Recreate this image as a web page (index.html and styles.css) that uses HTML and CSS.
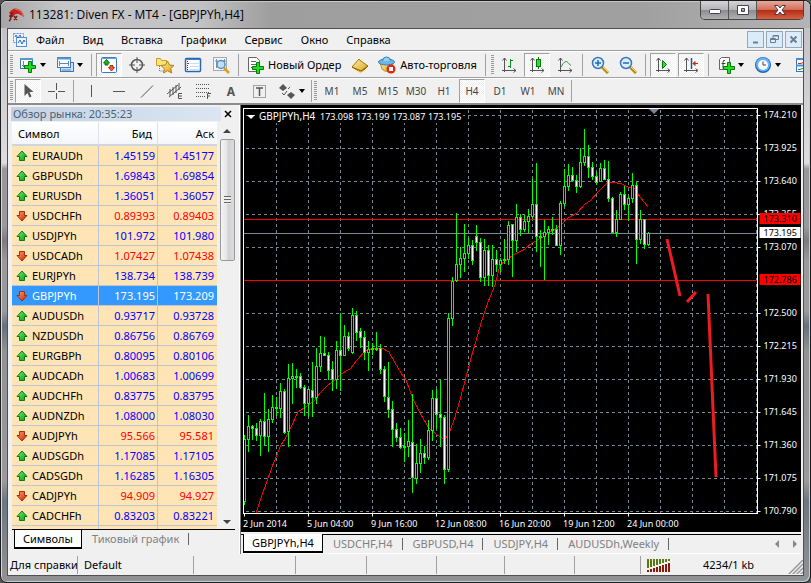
FILE: index.html
```html
<!DOCTYPE HTML>
<html lang="ru">
<head>
<meta charset="UTF-8">
<title>113281: Diven FX - MT4 - [GBPJPYh,H4]</title>
<link rel="stylesheet" href="styles.css">
</head>
<body>
<svg width="0" height="0" class="defs">
	<defs>
		<linearGradient id="gGreen" x1="0" y1="0" x2="1" y2="1"><stop offset="0" stop-color="#7be87b"/><stop offset="1" stop-color="#00a010"/></linearGradient>
		<linearGradient id="gRed" x1="0" y1="0" x2="1" y2="1"><stop offset="0" stop-color="#ff9a70"/><stop offset="1" stop-color="#d02000"/></linearGradient>
		<linearGradient id="gGold" x1="0" y1="0" x2="1" y2="1"><stop offset="0" stop-color="#fff3a8"/><stop offset="1" stop-color="#d89a10"/></linearGradient>
		<symbol id="up" viewBox="0 0 12 12"><path d="M6 1 L11 6.500 H8.500 V10.500 H3.500 V6.500 H1 Z" fill="url(#gGreen)" stroke="#08780f"/></symbol>
		<symbol id="down" viewBox="0 0 12 12"><path d="M6 11 L11 5.500 H8.500 V1.500 H3.500 V5.500 H1 Z" fill="url(#gRed)" stroke="#a03010"/></symbol>
		<symbol id="plus" viewBox="0 0 12 12"><path d="M4.500 .5h3v4h4v3h-4v4h-3v-4h-4v-3h4z" fill="#1fe01f" stroke="#067a0a"/></symbol>
		<symbol id="axes" viewBox="0 0 18 18"><path d="M4.500 2v14M2 14.500h14M2.500 4.500l2-2.500 2 2.500M13.500 12.500l2.500 2-2.500 2" fill="none" stroke="#555"/></symbol>
	</defs>
</svg>

<div class="window">
	<header class="title">
		<svg width="18" height="18" viewBox="0 0 18 18"><path d="M2 7 Q6 1 11 3 Q16 5 17 11 L12 8 Q8 7 6 11 Z" fill="#c8201c"/><path d="M8 3 Q14 4 16 10" fill="none" stroke="#f07060"/><path d="M2 15 Q4 14 4 10 Q4 7 6 7 M2 10h4M7 10l3 4M10 10l-3 4" fill="none" stroke="#7a1a18" stroke-width="1.500"/></svg>
		<h1>113281: Diven FX - MT4 - [GBPJPYh,H4]</h1>
		<div class="winbtns">
			<button aria-label="Minimize"><svg width="14" height="12"><rect x="1.500" y="5.500" width="11" height="4" rx="1" fill="#fff" stroke="#445"/></svg></button>
			<button aria-label="Maximize"><svg width="14" height="12"><path d="M1.500 1.500h11v9h-11z M5.500 4.500h3v3h-3z" fill="#fff" fill-rule="evenodd" stroke="#445"/></svg></button>
			<button class="close" aria-label="Close"><svg width="14" height="12"><path d="M1.500 1.500h3.500l2 2.500 2-2.500h3.500l-3.500 4.500 3.500 4.500h-3.500l-2-2.500-2 2.500h-3.500l3.500-4.500z" fill="#fff" stroke="#534"/></svg></button>
		</div>
	</header>

	<div class="client">
		<nav class="menu">
			<svg width="16" height="16"><g fill="#eef5ff" stroke="#5a8fd8"><rect x="1.500" y="1.500" width="10" height="9" stroke-dasharray="2 1"/><rect x="4.500" y="5.500" width="10" height="9"/></g><path d="M3 5l1-2 2 3 2-3 1 2M6 11l2-3 2 4 2-4 1 2" fill="none" stroke="#2a68c8"/></svg>
			<button>Файл</button><button>Вид</button><button>Вставка</button><button>Графики</button><button>Сервис</button><button>Окно</button><button>Справка</button>
			<div class="mdi">
				<button aria-label="Minimize chart"><svg width="11" height="11"><path d="M3 8.500h5" stroke="#6b7f94" stroke-width="2"/></svg></button>
				<button aria-label="Restore chart"><svg width="11" height="11"><path d="M4 4V1.500h5.500v4H7M4 2h6" fill="none" stroke="#6b7f94"/><path d="M1.500 4.500h5v4h-5zM1 5.500h6" fill="none" stroke="#6b7f94"/></svg></button>
				<button aria-label="Close chart"><svg width="11" height="11"><path d="M2.500 2.500l6 6M8.500 2.500l-6 6" stroke="#6b7f94" stroke-width="2"/></svg></button>
			</div>
		</nav>

		<div class="toolbar">
			<i class="grip"></i>
			<button class="tool drop" aria-label="New chart"><svg width="18" height="18"><rect x="1.500" y="2.500" width="12" height="10" fill="#fff" stroke="#3d78b8"/><path d="M1 3h13" stroke="#5b96d0" stroke-width="2"/><path d="M4.500 5v6M3 9.500h8" stroke="#789"/><use href="#plus" x="5" y="5" width="12" height="12"/></svg><b></b></button>
			<button class="tool drop" aria-label="Profiles"><svg width="18" height="18"><rect x="4.500" y="6.500" width="13" height="9" fill="#c8defa" stroke="#3d78b8"/><rect x="1.500" y="1.500" width="13" height="10" fill="#f4faff" stroke="#3d78b8"/><path d="M1 2.500h14" stroke="#5b96d0" stroke-width="2"/><path d="M3.500 5v5M12.500 5v5M3 7.500h10M6 14h9" stroke="#68a"/></svg><b></b></button>
			<i class="sep"></i>
			<button class="tool on" aria-label="Market watch"><svg width="18" height="18"><rect x="1.500" y="1.500" width="15" height="15" rx="1" fill="#fff" stroke="#3a78c0"/><path d="M1 2.500h16" stroke="#68a5e0"/><path d="M6.500 3.500l3 3.500h-1.500v2h-3v-2H3.500z" fill="#20b020" stroke="#08780f"/><path d="M11.500 15l3-3.500h-1.500v-2h-3v2H8.500z" fill="#f06030" stroke="#b03010"/></svg></button>
			<button class="tool" aria-label="Data window"><svg width="18" height="18"><circle cx="9" cy="9" r="5.500" fill="none" stroke="#555" stroke-width="1.500"/><path d="M9 1v6M9 11v6M1 9h6M11 9h6" stroke="#555"/></svg></button>
			<button class="tool" aria-label="Navigator"><svg width="20" height="18"><path d="M1.500 2.500h4l1 2h5v5h-10z" fill="#fbe27a" stroke="#c8a020"/><path d="M4.500 10v5h4" fill="none" stroke="#777" stroke-dasharray="1 1"/><path d="M12.500 5l2 4 4.500.5-3.300 3 1 4.500-4.200-2.300-4 2.300.8-4.500-3.300-3 4.500-.5z" fill="url(#gGold)" stroke="#b08010"/></svg></button>
			<button class="tool" aria-label="Terminal"><svg width="18" height="18"><rect x="1.500" y="2.500" width="15" height="13" rx="1" fill="#fff" stroke="#2868b0" stroke-width="1.500"/><path d="M1 3.500h16" stroke="#3a80c8"/><path d="M3.500 5v10" stroke="#204080" stroke-dasharray="1 1"/><path d="M3 7.500h2" stroke="#e02020"/><path d="M6 7.500h9M6 10.500h9M6 13.500h9" stroke="#c8dcf4"/></svg></button>
			<button class="tool" aria-label="Strategy tester"><svg width="18" height="18"><rect x="1.500" y="1.500" width="13" height="13" fill="#f4f6f8" stroke="#a0a8b0"/><path d="M4.500 3v9M12.500 3v9M3 5h3M11 5h3" stroke="#8090a0"/><circle cx="9" cy="8.500" r="4" fill="#c0e0f8" stroke="#5a90b8" stroke-width="1.500"/><path d="M12 12l5 5" stroke="#d8a020" stroke-width="2.500"/></svg></button>
			<i class="sep"></i>
			<button class="tool text"><svg width="18" height="18"><path d="M2.500 1.500h8l3 3v11h-11z" fill="#fff" stroke="#666"/><path d="M5 5.500h5M5 8.500h6M5 11.500h4" stroke="#666"/><use href="#plus" x="6" y="6" width="12" height="12"/></svg>Новый Ордер</button>
			<button class="tool" aria-label="MetaEditor"><svg width="18" height="18"><path d="M1 11l7-8q1 2 2 2l7 5-7 7z" fill="url(#gGold)" stroke="#a87010"/><path d="M1 11l9 4 7-5" fill="none" stroke="#8a5a08"/><path d="M2 13l8 4 7-5" fill="none" stroke="#fff0b0"/></svg></button>
			<button class="tool text"><svg width="18" height="18"><path d="M2 7h13l-1 6q-5 5-10 0z" fill="url(#gGold)" stroke="#c09020"/><ellipse cx="8.500" cy="6" rx="8" ry="3" fill="#6ab8e8" stroke="#3880b0"/><path d="M4.500 5q0-4 4-4t4 4" fill="#90d0f4" stroke="#3880b0"/><circle cx="13" cy="13" r="4.500" fill="#e02818"/><rect x="11" y="11" width="4" height="4" fill="#fff"/></svg>Авто-торговля</button>
			<i class="sep"></i><i class="grip"></i>
			<button class="tool" aria-label="Bar chart"><svg width="18" height="18"><use href="#axes" width="18" height="18"/><path d="M10.500 3v9M8 10.500h3M10 4.500h3" stroke="#0a9020"/></svg></button>
			<button class="tool on" aria-label="Candlesticks"><svg width="18" height="18"><use href="#axes" width="18" height="18"/><path d="M10.500 1v12" stroke="#067a0a"/><rect x="8.500" y="3.500" width="4" height="7" fill="#2be02b" stroke="#067a0a"/></svg></button>
			<button class="tool" aria-label="Line chart"><svg width="18" height="18"><use href="#axes" width="18" height="18"/><path d="M5 11q4-8 7-4.500t3 3" fill="none" stroke="#2a9a3a"/></svg></button>
			<i class="sep"></i>
			<button class="tool" aria-label="Zoom in"><svg width="18" height="18"><path d="M11 11l6 6" stroke="#b88a10" stroke-width="3"/><path d="M11 10l6 6" stroke="#f8dc60"/><circle cx="7" cy="7" r="5.500" fill="#d8eefc" stroke="#3878c0" stroke-width="1.500"/><path d="M4 7h6M7 4v6" stroke="#2868b0" stroke-width="1.500"/></svg></button>
			<button class="tool" aria-label="Zoom out"><svg width="18" height="18"><path d="M11 11l6 6" stroke="#b88a10" stroke-width="3"/><path d="M11 10l6 6" stroke="#f8dc60"/><circle cx="7" cy="7" r="5.500" fill="#d8eefc" stroke="#3878c0" stroke-width="1.500"/><path d="M4 7h6" stroke="#2868b0" stroke-width="1.500"/></svg></button>
			<i class="sep"></i>
			<button class="tool on" aria-label="Auto scroll"><svg width="18" height="18"><use href="#axes" width="18" height="18"/><path d="M8.500 4.500l4 4-4 4z" fill="#2be02b" stroke="#067a0a"/></svg></button>
			<button class="tool on" aria-label="Chart shift"><svg width="18" height="18"><use href="#axes" width="18" height="18"/><path d="M9.500 2v11" stroke="#1858a0" stroke-width="1.500"/><path d="M11 7.500h5M11 7.500l2-2v4z" fill="#e04020" stroke="#c03010"/></svg></button>
			<i class="sep"></i>
			<button class="tool drop" aria-label="Indicators"><svg width="18" height="18"><path d="M2.500 3.500l2-2h8v12h-10z" fill="#fff" stroke="#666"/><path d="M8 4.500q-2-1-2 2v6M4.500 7.500h4" fill="none" stroke="#444"/><use href="#plus" x="6" y="6" width="12" height="12"/></svg><b></b></button>
			<button class="tool drop" aria-label="Periods"><svg width="18" height="18"><circle cx="9" cy="9" r="8" fill="#1868c0"/><circle cx="9" cy="8.500" r="7" fill="#68b0f0"/><circle cx="9" cy="9" r="5" fill="#f6faff"/><path d="M9 5.500V9h3" fill="none" stroke="#444"/></svg><b></b></button>
			<button class="tool drop" aria-label="Templates"><svg width="18" height="18"><rect x="1.500" y="2.500" width="16" height="13" fill="#fff" stroke="#3a78c0"/><path d="M1 3h17M1 9.500h17" stroke="#4a90d8" stroke-width="2"/><path d="M3 7.500h3l2-1h3l1 1h4" fill="none" stroke="#c03020"/><path d="M3 13.500h2l2-1 3 1 3-2 3 1" fill="none" stroke="#20902a"/></svg></button>
		</div>

		<div class="toolbar second">
			<i class="grip"></i>
			<button class="tool on" aria-label="Cursor"><svg width="18" height="18"><path d="M5.500 2v12l3-3 2 4.500 2-1-2-4.500h4z" fill="#555"/></svg></button>
			<button class="tool" aria-label="Crosshair"><svg width="18" height="18"><path d="M9.500 1v7M9.500 11v6M1 9.500h7M11 9.500h7" stroke="#555"/></svg></button>
			<i class="sep"></i>
			<button class="tool" aria-label="Vertical line"><svg width="18" height="18"><path d="M9.500 3v12" stroke="#555"/></svg></button>
			<button class="tool" aria-label="Horizontal line"><svg width="18" height="18"><path d="M3 9.500h12" stroke="#555"/></svg></button>
			<button class="tool" aria-label="Trendline"><svg width="18" height="18"><path d="M3 15.500L15 3.500" stroke="#555"/></svg></button>
			<button class="tool" aria-label="Equidistant channel"><svg width="18" height="18"><path d="M1 12L12 3M3 15L15 5M4 7v7M7 5v8M10 3v8M13 1v7" stroke="#555"/><path d="M16 11.500h-3.500v5H16M13 14h3" fill="none" stroke="#555"/></svg></button>
			<button class="tool" aria-label="Fibonacci"><svg width="18" height="18"><path d="M2 2.500h14M2 6.500h14M2 10.500h14M2 14.500h9" stroke="#555" stroke-dasharray="1 1"/><path d="M13.500 17v-5.500H17M13 14h3" fill="none" stroke="#555"/></svg></button>
			<button class="tool letter">A</button>
			<button class="tool" aria-label="Text label"><svg width="18" height="18"><rect x="3.500" y="3.500" width="12" height="12" fill="none" stroke="#555" stroke-dasharray="1 1"/><path d="M6 6h7M9.500 6v8" stroke="#555" stroke-width="1.500"/></svg></button>
			<button class="tool drop" aria-label="Arrows"><svg width="18" height="18"><path d="M5 2l4 4-4 3-4-3zM13 10l4 3-4 4-4-4z" fill="#555"/><path d="M10 7l2-2M4 11l2 2 3-4" fill="none" stroke="#555"/></svg><b></b></button>
			<i class="sep end"></i><i class="grip end"></i>
			<button class="tool tf">M1</button><button class="tool tf">M5</button><button class="tool tf">M15</button><button class="tool tf">M30</button><button class="tool tf">H1</button><button class="tool tf on">H4</button><button class="tool tf">D1</button><button class="tool tf">W1</button><button class="tool tf">MN</button>
			<i class="sep end"></i>
		</div>

		<div class="work">
			<section class="market">
				<div class="caption"><h2>Обзор рынка: 20:35:23</h2><button aria-label="Close panel"><svg width="8" height="8"><path d="M1 1l6 6M7 1l-6 6" stroke="#000" stroke-width="1.500"/></svg></button></div>
				<div class="list">
					<div class="rows">
						<table>
							<thead><tr><th>Символ</th><th>Бид</th><th>Аск</th></tr></thead>
							<tbody id="quotes"></tbody>
						</table>
					</div>
					<div class="scroll"><i class="arr-up"></i><div class="thumb"><i></i></div><i class="arr-down"></i></div>
				</div>
				<div class="tabs left"><button class="active">Символы</button><button>Тиковый график</button></div>
			</section>

			<section class="chart">
				<svg id="chart"></svg>
				<div class="tabs"><button class="active">GBPJPYh,H4</button><button>USDCHF,H4</button><button>GBPUSD,H4</button><button>USDJPY,H4</button><button>AUDUSDh,Weekly</button>
					<span class="pager"><svg width="26" height="10"><path d="M6 1v8L2 5zM20 1v8l4-4z" fill="#888"/></svg></span>
				</div>
			</section>
		</div>

		<footer class="status">
			<span>Для справки</span><span>Default</span><span></span><span></span><span></span><span></span><span></span><span></span>
			<span class="net"><svg id="bars" width="24" height="13"></svg><em>4234/1 kb</em><svg class="size" width="15" height="15"><path d="M0 15L15 0M4 15L15 4M8 15l7-7M12 15l3-3" stroke="#999" stroke-width="1.500"/></svg></span>
		</footer>
	</div>
</div>
<script src="script.js"></script>
</body>
</html>
```

FILE: styles.css
```css
html, body, h1, h2, button, table { margin:0; padding:0; }
* { box-sizing:border-box; }
html, body { height:100%; }
body { font:normal 11px "Noto Sans","Open Sans",Tahoma,sans-serif; color:#000; background:#555; overflow:hidden; }
svg { display:block; flex:none; }
.defs { position:absolute; }
button { font:inherit; color:inherit; background:none; border:0; white-space:nowrap; }
i { font-style:normal; flex:none; }

/* window frame */
.window { height:100%; display:flex; flex-direction:column; padding:0 6px 6px; border:1px solid #1c1c1e; border-radius:7px; background:linear-gradient(#bdbdc0,#c9c9cd 60px,#dedee0 162px,#98989a 168px,#9a9a9c 225px,#7c7c80 240px,#9a9a9c 260px,#9a9a9c 310px,#65717c 325px,#909294 350px,#9a9a9c 480px,#6c7780 500px,#939395); box-shadow:inset 1px 1px 0 #d8d8da, inset -1px -1px 0 #b8d0d8; }
.title { flex:none; display:flex; align-items:center; height:27px; margin:0 -6px; padding-left:6px; border-radius:6px 6px 0 0; background:linear-gradient(90deg,#a6a6a8,#c6c6c8 60px,#c2c2c4 200px,#9e9e9e 270px,#a0a0a0 640px,#b4b4b6); box-shadow:inset 0 1px 0 #c8c8c8; }
.title h1 { flex:1; margin-left:4px; font:normal 12px/16px "Open Sans","Noto Sans",sans-serif; }
.winbtns { display:flex; align-self:flex-start; margin-right:6px; border:1px solid #444; border-top:0; border-radius:0 0 5px 5px; overflow:hidden; }
.winbtns button { display:flex; align-items:center; justify-content:center; width:28px; height:18px; border-right:1px solid #555; background:linear-gradient(#d4d4d6,#b4b4b8 48%,#8c8c90 50%,#b0b0b2); }
.winbtns .close { width:46px; border-right:0; background:linear-gradient(#e8a898,#d0705c 48%,#b02c14 50%,#d86040); }
.client { flex:1; min-height:0; display:flex; flex-direction:column; background:#f0f0f0; border:1px solid #505050; }

/* menu and toolbars */
.menu { flex:none; display:flex; align-items:center; height:22px; padding-left:4px; border-bottom:1px solid #a0a0a0; }
.menu > button { padding:0 9px 0 8px; line-height:20px; }
.menu > button + button { padding-left:9px; }
.mdi { display:flex; gap:2px; margin:0 1px 0 auto; }
.mdi button { display:flex; align-items:center; justify-content:center; width:17px; height:17px; border:1px solid #94a8bc; background:#dcebf9; }
.toolbar { flex:none; display:flex; align-items:center; height:27px; overflow:hidden; border-top:1px solid #fff; border-bottom:1px solid #a0a0a0; }
.grip { width:3px; height:20px; margin:0 1px 0 2px; background:repeating-linear-gradient(#999 0,#999 1px,#f0f0f0 1px,#f0f0f0 2px); }
.sep { width:1px; height:22px; margin:0 3px; background:#a0a0a0; }
.sep.end { margin:0 2px 0 1px; }
.grip.end { margin-left:0; }
.tool { flex:none; display:flex; align-items:center; justify-content:center; width:28px; height:24px; }
.tool.on { width:26px; margin:0 1px; border:1px solid; border-color:#a0a0a0 #fff #fff #a0a0a0; background:repeating-conic-gradient(#fff 0 25%,#f0f0f0 0 50%) 0 0/2px 2px; }
.tool.drop { width:37px; gap:3px; }
.tool.drop b { border:3px solid transparent; border-top:4px solid #000; border-bottom:0; }
.tool.text { width:auto; gap:4px; padding:0 5px 0 4px; }
.letter { font-size:12px; font-weight:bold; color:#555; }
.tf { font-size:10px; color:#444; }
.second { border-bottom:2px solid #8c8c8c; }

/* market watch */
.work { flex:1; min-height:0; display:flex; }
.market { flex:none; width:232px; display:flex; flex-direction:column; padding:0 4px 4px 3px; border-right:1px solid #fff; }
.caption { flex:none; display:flex; align-items:center; justify-content:space-between; height:17px; padding-right:3px; }
.caption h2 { width:210px; padding-left:2px; font-size:11px; font-weight:normal; line-height:14px; color:#4c6074; background:linear-gradient(90deg,#c3d2e2,#dce6f2); }
.list { flex:1; min-height:0; display:flex; margin-left:1px; border-bottom:1px solid #000; }
.rows { flex:1; overflow:hidden; background:#ffe4b5; }
table { width:100%; table-layout:fixed; border-collapse:separate; border-spacing:0; }
th { height:24px; padding:0 5px; font-weight:normal; text-align:right; background:linear-gradient(#fff,#f4f6f9); border-right:1px solid #dde2ea; border-bottom:2px solid #d0d6de; }
th:first-child { width:87px; padding-left:6px; text-align:left; }
th:nth-child(2) { width:59px; }
td { height:20px; padding:0 2px; text-align:right; color:#00f; border-right:1px solid #c0c4d0; border-bottom:1px solid #c0c4d0; }
td:last-child, th:last-child { padding-right:3px; border-right:0; }
td svg { display:inline-block; margin:0 4px 0 2px; vertical-align:-2px; }
.fall td { color:#f00; }
td:first-child { text-align:left; color:#000; }
.sel td, .sel td:first-child { color:#fff; background:#39f; }
.scroll { width:18px; display:flex; flex-direction:column; align-items:center; padding:7px 0 5px 2px; background:#f0f0f0; }
.arr-up, .arr-down { border:4px solid transparent; }
.arr-up { border-bottom-color:#444; border-top:0; margin-bottom:6px; }
.arr-down { border-top-color:#444; border-bottom:0; margin-top:auto; }
.thumb { width:15px; height:122px; display:flex; align-items:center; justify-content:center; border:1px solid #999; border-radius:2px; background:linear-gradient(90deg,#f4f4f4,#e4e4e6 48%,#d0d0d4 52%,#dcdcde); }
.thumb i { width:7px; height:8px; background:repeating-linear-gradient(#666 0,#666 1px,#eee 1px,#eee 3px); }

/* tabs */
.tabs { flex:none; display:flex; height:20px; padding-left:2px; color:#808080; border-top:1px solid #000; border-bottom:1px solid #fff; }
.tabs button { height:18px; padding:0 10px; line-height:16px; position:relative; }
.tabs button:not(.active)::after { content:""; position:absolute; right:0; top:3px; height:12px; border-right:1px solid #666; }
.tabs .active { margin-top:-1px; padding:0 8px; height:19px; color:#000; background:#fff; border:1px solid #000; border-top:0; border-bottom-width:2px; }
.tabs.left { margin-left:1px; border:0; }
.tabs.left .active { margin-top:0; }
.pager { margin:4px 2px 0 auto; }
.chart { flex:1; min-width:0; display:flex; flex-direction:column; padding-right:2px; border-left:1px solid #777; }
#chart { flex:1; min-height:0; width:100%; margin-bottom:2px; background:#000; font-size:9px; }
#chart .name { font-size:10px; }

/* status bar */
.status { flex:none; display:grid; grid-template-columns:70px 116px 102fr 71fr 71fr 68fr 70fr 66fr 162px; height:21px; padding:2px 0 1px; }
.status span { padding-left:6px; line-height:18px; white-space:nowrap; overflow:hidden; border-right:1px solid #a0a0a0; }
.status span:first-child { padding-left:2px; }
.status .net { display:flex; align-items:center; border-right:0; }
.net em { margin-left:32px; font-style:normal; }
.net .size { margin:4px 0 0 auto; }
```

FILE: script.js
```js
var NS = 'http://www.w3.org/2000/svg',
	$ = function(a) {
		return document.getElementById(a);
	},
	add = function(parent, name, attrs, text) {
		var el = document.createElementNS(NS, name);
		for(var k in attrs) el.setAttribute(k, attrs[k]);
		if(text) el.textContent = text;
		parent.appendChild(el);
		return el;
	};

/* symbol, bid, ask, last move */
var quotes = [
	['EURAUDh','1.45159','1.45177','up'],
	['GBPUSDh','1.69843','1.69854','up'],
	['EURUSDh','1.36051','1.36057','up'],
	['USDCHFh','0.89393','0.89403','down'],
	['USDJPYh','101.972','101.980','up'],
	['USDCADh','1.07427','1.07438','down'],
	['EURJPYh','138.734','138.739','up'],
	['GBPJPYh','173.195','173.209','down'],
	['AUDUSDh','0.93717','0.93728','up'],
	['NZDUSDh','0.86756','0.86769','up'],
	['EURGBPh','0.80095','0.80106','up'],
	['AUDCADh','1.00683','1.00699','up'],
	['AUDCHFh','0.83775','0.83795','up'],
	['AUDNZDh','1.08000','1.08030','up'],
	['AUDJPYh','95.566','95.581','down'],
	['AUDSGDh','1.17085','1.17105','up'],
	['CADSGDh','1.16285','1.16305','up'],
	['CADJPYh','94.909','94.927','down'],
	['CADCHFh','0.83203','0.83221','up']
];
$('quotes').innerHTML = quotes.map(function(q) {
	var cls = q[0] == 'GBPJPYh' ? 'sel' : q[3] == 'down' ? 'fall' : '';
	return '<tr class="' + cls + '"><td><svg width="12" height="12"><use href="#' + q[3] + '"/></svg>' + q[0] + '</td><td>' + q[1] + '</td><td>' + q[2] + '</td></tr>';
}).join('') + '<tr><td></td><td></td><td></td></tr>';

/* high, body top, body bottom, low, 1 = rising */
var candles = [
	[335,339,401,405,1],[315,326,339,352,1],[325,326,328,340,0],[323,328,335,341,0],[319,321,335,356,1],[293,321,336,346,0],
	[309,319,336,352,1],[295,307,319,323,1],[297,307,308,316,1],[283,291,308,318,1],[289,291,332,334,0],[264,278,331,347,1],
	[263,276,278,304,1],[269,276,277,288,1],[273,276,287,289,0],[285,287,303,316,0],[289,289,303,317,1],[262,290,297,317,0],
	[248,266,297,304,1],[236,253,266,272,1],[237,253,255,256,0],[252,255,270,280,0],[261,269,279,291,0],[241,250,279,289,1],
	[213,250,255,291,0],[225,236,255,255,1],[232,236,248,251,0],[208,215,252,254,1],[211,215,232,241,0],[228,231,237,248,0],
	[231,237,252,260,0],[241,249,252,271,1],[243,248,249,255,1],[232,248,249,251,1],[244,248,269,274,0],[266,269,296,302,0],
	[262,297,309,318,0],[301,309,329,347,0],[323,329,337,342,0],[328,337,347,349,0],[333,346,347,362,1],[320,341,346,357,1],
	[294,342,377,393,0],[344,363,378,384,1],[339,353,363,373,1],[346,353,357,364,0],[320,330,357,360,1],[290,298,330,341,1],
	[289,298,314,329,0],[280,314,317,347,0],[315,317,369,384,0],[213,218,369,372,1],[177,181,218,226,1],[113,164,180,182,1],
	[147,158,164,178,1],[124,153,158,172,1],[138,145,153,159,1],[140,145,160,165,0],[125,136,142,151,0],[138,142,177,182,0],
	[139,150,177,186,1],[145,150,175,186,0],[145,159,175,187,1],[150,159,164,172,0],[158,160,164,172,1],
	[139,159,160,164,0],[121,125,159,165,1],[124,124,140,177,0],[104,117,140,152,1],[114,117,129,136,0],[115,121,129,132,1],
	[109,116,121,133,1],[79,104,116,119,1],[63,104,136,152,0],[130,136,137,167,0],[120,132,136,180,1],[126,129,132,145,1],
	[117,129,130,135,0],[125,129,145,146,0],[101,103,145,155,1],[69,86,103,107,1],[64,75,86,91,1],[67,75,80,82,0],
	[75,80,86,93,0],[48,62,86,88,1],[29,56,62,66,1],[45,56,67,78,0],[62,67,76,80,0],[72,76,82,85,0],
	[63,68,81,82,1],[60,68,79,80,0],[61,79,98,102,0],[97,98,132,133,0],[110,119,132,137,1],[92,94,119,120,1],
	[86,94,104,110,0],[96,98,104,121,1],[73,85,98,103,1],[82,85,139,164,0],[110,119,139,144,1],[119,119,144,149,0],[132,133,144,146,1]
];
/* moving average, x y pairs */
var average = '15,408 20,393 31,362 40,340 44,334 50,322 57,307 66,301 73,296 80,287 86,281 94,275 100,269 109,264 116,255 124,246 133,243 141,243 148,247 154,258 160,268 165,275 172,294 180,310 188,323 196,330 203,334 207,331 213,315 219,295 230,253 241,215 247,197 254,180 259,160 272,150 284,144 291,138 302,132 312,125 319,121 327,113 336,108 344,99 349,96 357,87 366,78 372,77 381,79 387,82 394,84 399,92 407,102';

var drawChart = function() {
	var svg = $('chart'), W = svg.clientWidth, H = svg.clientHeight,
		right = W - 43.5, bottom = H - 18.5,
		labels = ['2 Jun 2014','5 Jun 04:00','9 Jun 16:00','12 Jun 08:00','16 Jun 20:00','19 Jun 12:00','24 Jun 00:00'],
		i, x, y;
	svg.innerHTML = '';
	var g = add(svg, 'g', {'shape-rendering':'crispEdges', fill:'none'});
	for(y = 10.5; y < bottom; y += 33) add(g, 'path', {d:'M5 ' + y + 'H' + right, stroke:'#778899', 'stroke-dasharray':'3 3'});
	for(x = 35.5; x < right; x += 32) add(g, 'path', {d:'M' + x + ' 5V' + bottom, stroke:'#778899', 'stroke-dasharray':'3 3'});
	add(g, 'path', {d:'M3 128.5H' + right, stroke:'#778899'});
	add(g, 'path', {d:'M3 114.5H' + right, stroke:'#f00'});
	add(g, 'path', {d:'M3 175.5H' + right, stroke:'#f00'});
	add(g, 'polyline', {points:average, stroke:'#f00'});
	/* candle heights have a 5px top offset */
	candles.forEach(function(c, n) {
		x = 3.5 + n * 4;
		add(g, 'path', {d:'M' + x + ' ' + (c[0] - 5) + 'V' + (c[3] - 5), stroke:'#0f0'});
		add(g, 'rect', {x:x - 1, y:c[1] - 4.5, width:2, height:Math.max(c[2] - c[1], 1), fill:c[4] ? '#000' : '#fff', stroke:'#0f0'});
	});
	add(g, 'path', {d:'M2.5 ' + bottom + 'V3.5H' + right + 'V' + bottom + 'H2', stroke:'#fff'});
	add(svg, 'path', {d:'M408 4h10l-5 5z', fill:'#778899'});
	add(svg, 'path', {d:'M426 134L439 191M446 197L455 187M467 189L475 372', stroke:'#ed1c24', 'stroke-width':3, fill:'none'});
	add(svg, 'rect', {x:17, y:5, width:205, height:13, fill:'#000'});
	add(svg, 'path', {d:'M6 10h8l-4 4z', fill:'#fff'});
	add(svg, 'text', {x:18, y:15, fill:'#fff', 'class':'name'}, 'GBPJPYh,H4');
	['173.098','173.199','173.087','173.195'].forEach(function(t, n) {
		add(svg, 'text', {x:79 + n * 36, y:15, fill:'#fff'}, t);
	});
	for(i = 0, y = 10; y < bottom; i++, y += 33) {
		if(i == 5) continue;
		add(svg, 'path', {d:'M' + right + ' ' + (y + .5) + 'h3', stroke:'#fff'});
		add(svg, 'text', {x:right + 6, y:y + 3, fill:'#fff'}, (174.21 - i * .285).toFixed(3));
	}
	[[114,'173.310','#f00','#000'],[128,'173.195','#fff','#000'],[175,'172.786','#f00','#000']].forEach(function(p) {
		add(svg, 'rect', {x:right + 2, y:p[0] - 6, width:41, height:11, fill:p[2]});
		add(svg, 'text', {x:right + 6, y:p[0] + 3, fill:p[3]}, p[1]);
	});
	labels.forEach(function(t, n) {
		add(svg, 'path', {d:'M' + (3.5 + n * 64) + ' ' + bottom + 'v3', stroke:'#fff'});
		add(svg, 'text', {x:2 + n * 64, y:H - 5, fill:'#fff'}, t);
	});
};
drawChart();
window.onresize = drawChart;

for(var n = 0; n < 8; n++) {
	add($('bars'), 'rect', {x:n * 3, y:0, width:2, height:9 - n, fill:'#5a7a10'});
	add($('bars'), 'rect', {x:n * 3, y:11 - n, width:2, height:2 + n, fill:'#901808'});
}
```
